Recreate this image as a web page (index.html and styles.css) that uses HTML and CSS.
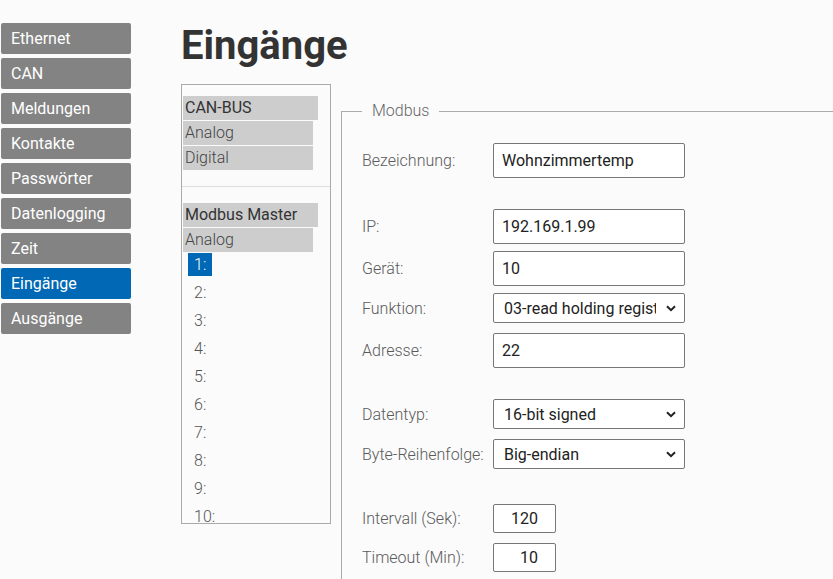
FILE: index.html
```html
<!DOCTYPE html>
<html>
<head>
    <meta charset="utf-8">
    <title>Eingänge</title>
    <link rel="stylesheet" href="styles.css">
</head>
<body>
    <div class="nav">
        <a class="nav-item">Ethernet</a>
        <a class="nav-item">CAN</a>
        <a class="nav-item">Meldungen</a>
        <a class="nav-item">Kontakte</a>
        <a class="nav-item">Passwörter</a>
        <a class="nav-item">Datenlogging</a>
        <a class="nav-item">Zeit</a>
        <a class="nav-item active">Eingänge</a>
        <a class="nav-item">Ausgänge</a>
    </div>

    <div class="main">
        <h1>Eingänge</h1>

        <div class="content">
            <div class="inputs-list">
                <div class="group-head">CAN-BUS</div>
                <div class="group-item">Analog</div>
                <div class="group-item">Digital</div>

                <div class="separator"></div>

                <div class="group-head">Modbus Master</div>
                <div class="group-item">Analog</div>
                <div class="channel"><span class="channel-no selected">1:</span></div>
                <div class="channel"><span class="channel-no">2:</span></div>
                <div class="channel"><span class="channel-no">3:</span></div>
                <div class="channel"><span class="channel-no">4:</span></div>
                <div class="channel"><span class="channel-no">5:</span></div>
                <div class="channel"><span class="channel-no">6:</span></div>
                <div class="channel"><span class="channel-no">7:</span></div>
                <div class="channel"><span class="channel-no">8:</span></div>
                <div class="channel"><span class="channel-no">9:</span></div>
                <div class="channel"><span class="channel-no">10:</span></div>
            </div>

            <fieldset class="modbus">
                <legend>Modbus</legend>

                <div class="form-row gap-large">
                    <label for="name">Bezeichnung:</label>
                    <input type="text" id="name" class="field" value="Wohnzimmertemp">
                </div>

                <div class="form-row gap-small">
                    <label for="ip">IP:</label>
                    <input type="text" id="ip" class="field" value="192.169.1.99">
                </div>
                <div class="form-row gap-small">
                    <label for="device">Gerät:</label>
                    <input type="text" id="device" class="field" value="10">
                </div>
                <div class="form-row gap-medium">
                    <label for="func">Funktion:</label>
                    <span class="select-wrap">
                        <select id="func" class="field select">
                            <option>03-read holding registers</option>
                            <option>04-read input registers</option>
                        </select>
                        <svg class="chevron" width="10" height="7" viewBox="0 0 10 7"><path d="M1 1.2 L5 5.2 L9 1.2" fill="none" stroke="#222" stroke-width="2"/></svg>
                    </span>
                </div>
                <div class="form-row gap-large">
                    <label for="addr">Adresse:</label>
                    <input type="text" id="addr" class="field" value="22">
                </div>

                <div class="form-row gap-medium">
                    <label for="type">Datentyp:</label>
                    <span class="select-wrap">
                        <select id="type" class="field select">
                            <option>16-bit signed</option>
                            <option>16-bit unsigned</option>
                        </select>
                        <svg class="chevron" width="10" height="7" viewBox="0 0 10 7"><path d="M1 1.2 L5 5.2 L9 1.2" fill="none" stroke="#222" stroke-width="2"/></svg>
                    </span>
                </div>
                <div class="form-row gap-xlarge">
                    <label for="order">Byte-Reihenfolge:</label>
                    <span class="select-wrap">
                        <select id="order" class="field select">
                            <option>Big-endian</option>
                            <option>Little-endian</option>
                        </select>
                        <svg class="chevron" width="10" height="7" viewBox="0 0 10 7"><path d="M1 1.2 L5 5.2 L9 1.2" fill="none" stroke="#222" stroke-width="2"/></svg>
                    </span>
                </div>

                <div class="form-row gap-medium">
                    <label for="interval">Intervall (Sek):</label>
                    <input type="text" id="interval" class="field short" value="120">
                </div>
                <div class="form-row">
                    <label for="timeout">Timeout (Min):</label>
                    <input type="text" id="timeout" class="field short" value="10">
                </div>
            </fieldset>
        </div>
    </div>
</body>
</html>
```

FILE: styles.css
```css
html, body {
    overflow: hidden;
}

body {
    font-family: Roboto, "Liberation Sans", sans-serif;
    background-color: #fbfbfb;
    color: #333;
    margin: 0;
    display: flex;
    align-items: flex-start;
}

/* left menu */
.nav {
    flex-shrink: 0;
    width: 130px;
    margin: 23px 0 0 1px;
    display: flex;
    flex-direction: column;
    gap: 4px;
}

.nav-item {
    display: block;
    height: 31px;
    line-height: 31px;
    padding-left: 10px;
    background-color: #838383;
    color: #fff;
    font-size: 16px;
    border-radius: 2px;
}

.nav-item.active {
    background-color: #0068b5;
}

.main {
    flex-shrink: 0;
    margin-left: 50px;
}

h1 {
    font-size: 40px;
    font-weight: 700;
    color: #333;
    margin: 21px 0 0 0;
    line-height: 50px;
}

.content {
    display: flex;
    align-items: flex-start;
    margin-top: 13px;
}

/* list of input channels */
.inputs-list {
    flex-shrink: 0;
    width: 147px;
    height: 427px;
    border: 1px solid #aaa;
    padding: 11px 0 0 1px;
    overflow: hidden;
    font-size: 16px;
}

.inputs-list > div {
    box-sizing: border-box;
}

.group-head,
.group-item {
    height: 24px;
    line-height: 24px;
    padding-left: 2px;
    margin-bottom: 1px;
    background-color: #cdcdcd;
}

.group-head {
    width: 135px;
    color: #333;
}

.group-item {
    width: 130px;
    font-weight: 300;
    color: #444;
}

.separator {
    height: 1px;
    background-color: #ddd;
    margin: 16px 0 16px -1px;
    width: 148px;
}

.channel {
    height: 28px;
    padding-left: 5px;
}

.channel-no {
    display: inline-block;
    height: 23px;
    line-height: 23px;
    padding: 0 6px;
    font-weight: 300;
    color: #555;
}

.channel-no.selected {
    background-color: #0068b5;
    color: #fff;
}

/* modbus settings */
.modbus {
    flex-shrink: 0;
    width: 600px;
    margin: 17px 0 0 10px;
    border: 1px solid #aaa;
    padding: 22px 20px 40px 20px;
    min-width: 0;
}

.modbus legend {
    padding: 0 10px;
    font-size: 16px;
    line-height: 20px;
    font-weight: 300;
    color: #666;
}

.form-row {
    display: flex;
    align-items: center;
}

.form-row label {
    width: 131px;
    font-size: 16px;
    font-weight: 300;
    color: #5a5a5a;
}

.gap-small { margin-bottom: 7px; }
.gap-medium { margin-bottom: 10px; }
.gap-large { margin-bottom: 31px; }
.gap-xlarge { margin-bottom: 35px; }

.field {
    box-sizing: border-box;
    width: 192px;
    height: 35px;
    border: 1px solid #777;
    border-radius: 2px;
    background-color: #fff;
    padding: 0 8px;
    font-family: Roboto, "Liberation Sans", sans-serif;
    font-size: 16px;
    color: #222;
    margin: 0;
}

.select-wrap {
    position: relative;
    display: block;
}

.select {
    display: block;
    height: 30px;
    padding: 0 28px 0 10px;
    appearance: none;
    -webkit-appearance: none;
}

.chevron {
    position: absolute;
    right: 9px;
    top: 12px;
    pointer-events: none;
}

.short {
    width: 63px;
    height: 29px;
    text-align: right;
    padding-right: 17px;
}
```
